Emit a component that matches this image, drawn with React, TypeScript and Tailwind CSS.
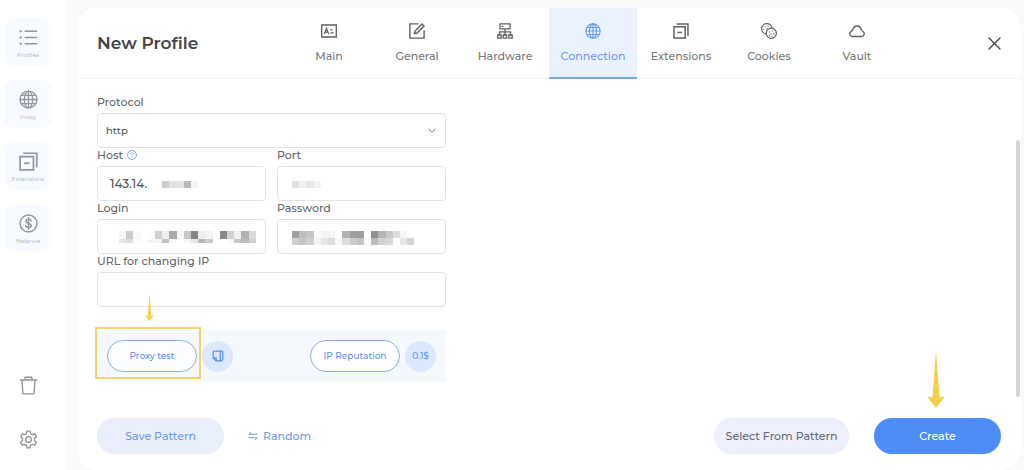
import React, { useId } from "react";

type IconProps = { className?: string };

const stroke = {
  fill: "none",
  stroke: "currentColor",
  strokeLinecap: "round" as const,
  strokeLinejoin: "round" as const,
};

function ListIcon({ className }: IconProps) {
  return (
    <svg viewBox="0 0 20 20" className={className} {...stroke} strokeWidth="1.6">
      <path d="M6.5 3.5h12M6.5 10h12M6.5 16.5h12" />
      <path d="M1.5 3.5h.6M1.5 10h.6M1.5 16.5h.6" strokeWidth="2.2" />
    </svg>
  );
}

function GlobeIcon({ className }: IconProps) {
  return (
    <svg viewBox="0 0 20 20" className={className} {...stroke} strokeWidth="1.4">
      <circle cx="10" cy="10" r="8.9" />
      <ellipse cx="10" cy="10" rx="4.4" ry="8.9" />
      <path d="M10 1.1v17.8M1.1 10h17.8M2.4 5.6h15.2M2.4 14.4h15.2" />
    </svg>
  );
}

function WindowsIcon({ className }: IconProps) {
  return (
    <svg viewBox="0 0 20 20" className={className} {...stroke} strokeLinecap="butt" strokeLinejoin="miter" strokeWidth="1.8">
      <path d="M1.2 4.8h14v14H1.2z" />
      <path d="M4.500 1.300h14.200v15" />
      <path d="M5.400 11.800h5.600" />
    </svg>
  );
}

function DollarIcon({ className }: IconProps) {
  return (
    <svg viewBox="0 0 20 20" className={className} {...stroke} strokeWidth="1.5">
      <circle cx="10" cy="10" r="8.9" />
      <path d="M12.8 7.4c-.3-1.2-1.4-1.8-2.8-1.8-1.6 0-2.8.8-2.8 2.1 0 3 5.8 1.4 5.8 4.5 0 1.3-1.2 2.2-3 2.2-1.6 0-2.8-.7-3.1-2M10 4v12" />
    </svg>
  );
}

function TrashIcon({ className }: IconProps) {
  return (
    <svg viewBox="0 0 20 20" className={className} {...stroke} strokeWidth="1.5">
      <path d="M1.5 4.3h17M6.5 4V1.4h7V4M3.2 4.5l.8 13c.1.8.5 1.3 1.3 1.3h9.4c.8 0 1.2-.5 1.3-1.3l.8-13" />
    </svg>
  );
}

function GearIcon({ className }: IconProps) {
  return (
    <svg viewBox="0 0 24 24" className={className} {...stroke} strokeWidth="1.7">
      <circle cx="12" cy="12" r="3.6" />
      <path d="M10 1.5h4l.7 3.1 2.2 1.3 3-1 2 3.5-2.3 2.1v3l2.3 2.1-2 3.5-3-1-2.2 1.3-.7 3.1h-4l-.7-3.1-2.2-1.3-3 1-2-3.5 2.3-2.1v-3L2.1 8.4l2-3.5 3 1 2.2-1.3z" />
    </svg>
  );
}

function CardIcon({ className }: IconProps) {
  return (
    <svg viewBox="0 0 16 16" className={className} {...stroke} strokeLinejoin="miter" strokeWidth="1.3">
      <path d="M.7 2h14.6v12H.7z" />
      <path d="M3.500 10.600l2-5 2 5M4.200 9.200h2.600M9.800 6.800h1.200M9.800 9.800h2.400" />
    </svg>
  );
}

function EditIcon({ className }: IconProps) {
  return (
    <svg viewBox="0 0 16 16" className={className} {...stroke} strokeLinejoin="miter" strokeWidth="1.4">
      <path d="M9 .9H.9v14.2h14.2V8" />
      <path d="M5.500 10.500l.5-2.500 7-7 2 2-7 7z" />
    </svg>
  );
}

function HardwareIcon({ className }: IconProps) {
  return (
    <svg viewBox="0 0 16 16" className={className} {...stroke} strokeLinejoin="miter" strokeWidth="1.3">
      <path d="M3 .8h10v5H3zM5 3.3h1M8 6v6M2.5 12V8.8h11V12" />
      <path d="M.8 12h3.4v3.2H.8zM6.3 12h3.4v3.2H6.3zM11.8 12h3.4v3.2h-3.4z" />
    </svg>
  );
}

function CookiesIcon({ className }: IconProps) {
  return (
    <svg viewBox="0 0 16 16" className={className} {...stroke} strokeWidth="1.2">
      <path d="M5.2 10.9A5.2 5.2 0 1 1 11 5.1" />
      <circle cx="10.3" cy="10.3" r="5.100" />
      <path
        d="M4 3.500h.1M7 3.200h.1M3 6.300h.1M6 5.600h.1M8.200 8.800h.1M11.300 8h.1M10 11h.1M12.800 10.800h.1M8.300 12.600h.1M11 13.300h.1"
        strokeWidth="1.2"
      />
    </svg>
  );
}

function CloudIcon({ className }: IconProps) {
  return (
    <svg viewBox="0 0 16 16" className={className} {...stroke} strokeWidth="1.3">
      <path d="M3.500 13.500h9a2.700 2.700 0 0 0 1.600-4.900c-.8-.6-1.300-.8-1.700-1.800C11.500 4.400 10 3 8 3S4.500 4.400 3.600 6.800c-.4 1-.9 1.200-1.700 1.800a2.700 2.700 0 0 0 1.600 4.900z" />
    </svg>
  );
}

function CopyIcon({ className }: IconProps) {
  return (
    <svg viewBox="0 0 12 12" className={className} {...stroke} strokeWidth="1.3">
      <path d="M1.200 2.200c0-.6.400-1 1-1h6.100v8.200c0 .9-.6 1.500-1.500 1.500H4.200l-3-2.800z" />
      <path d="M8.300 1.200h1.500c.6 0 1 .4 1 1v6.600c0 1.200-.8 2-2 2.100H6.500M1.400 8h2.800v2.700" />
    </svg>
  );
}

function SwapIcon({ className }: IconProps) {
  return (
    <svg viewBox="0 0 10 10" className={className} {...stroke} strokeWidth="1">
      <path d="M3 1L.8 3.3h8.400M7 9l2.200-2.300H.8" />
    </svg>
  );
}

function Arrow({ className }: IconProps) {
  return (
    <svg viewBox="0 0 18 60" className={className} preserveAspectRatio="none" fill="#f5d04c">
      <path d="M9 0L12.500 49 18 48 9 60 0 48l5.500 1z" />
    </svg>
  );
}

const CELL = 7.2;

function Mosaic({ rows, heights, className }: { rows: string[]; heights: number[]; className: string }) {
  const cells = rows.map((r) => r.split(" "));
  const width = cells[0].length * CELL;
  const height = heights.reduce((a, b) => a + b, 0);
  return (
    <svg
      viewBox={`0 0 ${width} ${height}`}
      width={width}
      height={height}
      shapeRendering="crispEdges"
      className={className}
      aria-hidden="true"
    >
      {cells.map((row, y) =>
        row.map((c, x) => (
          <rect
            key={`${x}-${y}`}
            x={x * CELL}
            y={y === 0 ? 0 : heights[0]}
            width={CELL}
            height={heights[y]}
            fill={`#${c}${c}${c}`}
          />
        )),
      )}
    </svg>
  );
}

const masks = {
  host: { rows: ["cc e0 e4 b8 f5"], heights: [7] },
  port: { rows: ["e2 f2 e8 f3"], heights: [7] },
  login: {
    rows: [
      "f7 cb f8 ff fb d0 ee aa f6 c8 86 ee f3 ff 86 d0 f0 b0 da",
      "e4 dd fb ff f3 f4 c2 f8 ff f8 e6 b6 cc ff ff f7 c6 bc d0",
    ],
    heights: [8, 4],
  },
  password: {
    rows: [
      "a0 be c6 f9 f5 f6 ff b2 9e 9e ff 90 b4 ca dc f6 ff",
      "d0 c4 ce f3 e6 dc f9 dd cc c4 f9 bc d4 d8 ff e6 d4",
    ],
    heights: [7, 7],
  },
};

const fieldBox =
  "block h-[35px] w-full rounded-[4px] border border-[#e2e2e2] bg-white text-[#555] outline-none focus:border-[#5c93ec]";

function Field({
  label,
  hint,
  value,
  type = "text",
  mask,
  maskClass = "",
}: {
  label: string;
  hint?: boolean;
  value?: string;
  type?: string;
  mask?: { rows: string[]; heights: number[] };
  maskClass?: string;
}) {
  const id = useId();
  return (
    <div>
      <div className="flex h-[18px] items-center gap-1 pb-1">
        <label htmlFor={id}>{label}</label>
        {hint && (
          <svg viewBox="0 0 10 10" className="size-[10px] text-[#5c93ec]" {...stroke} strokeWidth="0.8">
            <circle cx="5" cy="5" r="4.4" />
            <path d="M3.700 4c0-1.700 2.600-1.700 2.600 0 0 1-1.300 1-1.300 2M5 7.500h.01" />
          </svg>
        )}
      </div>
      <div className="relative">
        <input id={id} type={type} defaultValue={value} className={`${fieldBox} px-3 text-xs`} />
        {mask && <Mosaic {...mask} className={`pointer-events-none absolute ${maskClass}`} />}
      </div>
    </div>
  );
}

const sideItems = [
  { label: "Profiles", Icon: ListIcon },
  { label: "Proxy", Icon: GlobeIcon },
  { label: "Extensions", Icon: WindowsIcon },
  { label: "Balance", Icon: DollarIcon },
];

const tabs = [
  { label: "Main", Icon: CardIcon },
  { label: "General", Icon: EditIcon },
  { label: "Hardware", Icon: HardwareIcon },
  { label: "Connection", Icon: GlobeIcon, active: true },
  { label: "Extensions", Icon: WindowsIcon },
  { label: "Cookies", Icon: CookiesIcon },
  { label: "Vault", Icon: CloudIcon },
];

export default function App() {
  return (
    <div className="flex min-h-screen bg-[#fafafa] font-['Montserrat','Inter',sans-serif] text-[11px] font-medium text-[#666]">
      <aside className="flex w-[65px] shrink-0 flex-col justify-between bg-white pt-[18px] pb-[21px] pl-1">
        <nav className="flex flex-col gap-[14px]">
          {sideItems.map(({ label, Icon }) => (
            <button
              key={label}
              type="button"
              className="flex h-12 w-12 flex-col items-center justify-center gap-1 rounded-[10px] bg-[#f7faff] pt-[3px] text-[#9196a0]"
            >
              <Icon className="size-[19px]" />
              <span className="text-[6px] leading-[8px] font-normal text-[#aab0ba]">{label}</span>
            </button>
          ))}
        </nav>
        <div className="flex w-12 flex-col items-center gap-[35px] text-[#929292]">
          <button type="button" aria-label="Trash">
            <TrashIcon className="size-[19px]" />
          </button>
          <button type="button" aria-label="Settings">
            <GearIcon className="size-[19px]" />
          </button>
        </div>
      </aside>

      <main className="mt-2 mr-[3px] ml-3 flex min-w-0 flex-1 flex-col rounded-[18px] bg-white shadow-[0_0_2px_rgba(0,0,0,0.06)]">
        <header className="flex h-[71px] items-center border-b border-[#f4f5f6] px-5">
          <h1 className="w-[188px] shrink-0 pt-px text-[17px] font-semibold text-[#444]">New Profile</h1>
          <div className="flex h-[71px]" role="tablist">
            {tabs.map(({ label, Icon, active }) => (
              <button
                key={label}
                type="button"
                role="tab"
                aria-selected={!!active}
                className={`flex w-[88px] flex-col items-center gap-2 border-b-2 pt-[15px] leading-[18px] ${
                  active ? "border-[#7ba7dc] bg-[#eaf2fe] text-[#6a9cec]" : "border-transparent text-[#777]"
                }`}
              >
                <Icon className={active ? "size-4" : "size-4 text-[#5f5f5f]"} />
                {label}
              </button>
            ))}
          </div>
          <button type="button" aria-label="Close" className="ml-auto text-[#444]">
            <svg viewBox="0 0 13 13" className="size-[13px]" {...stroke} strokeWidth="1.4">
              <path d="M1 1l11 11M12 1L1 12" />
            </svg>
          </button>
        </header>

        <div className="flex flex-1 justify-between pr-px pl-5">
          <form className="w-[349px] pt-4 leading-[14px]">
            <div>
              <label htmlFor="protocol" className="block h-[18px]">
                Protocol
              </label>
              <div className="relative">
                <select id="protocol" className={`${fieldBox} appearance-none px-2 text-[10px]`} defaultValue="http">
                  <option value="http">http</option>
                  <option value="https">https</option>
                  <option value="socks5">socks5</option>
                </select>
                <svg
                  viewBox="0 0 8 6"
                  className="pointer-events-none absolute top-[15px] right-[10px] h-[6px] w-2 text-[#888]"
                  {...stroke}
                  strokeWidth="1"
                >
                  <path d="M1 1l3 3.500L7 1" />
                </svg>
              </div>
            </div>
            <div className="grid grid-cols-2 gap-x-[11px]">
              <Field label="Host" hint value="143.14." mask={masks.host} maskClass="top-[15px] left-[65px]" />
              <Field label="Port" mask={masks.port} maskClass="top-[15px] left-[15px]" />
              <Field label="Login" mask={masks.login} maskClass="top-3 left-[22px]" />
              <Field label="Password" type="password" mask={masks.password} maskClass="top-3 left-[15px]" />
            </div>
            <Field label="URL for changing IP" />

            <div className="relative mt-[23px] flex h-[52px] items-center justify-between rounded-[4px] bg-[#f5f9fe] px-[10px] text-[9px] text-[#5c93ec]">
              <div className="flex items-center gap-[5px]">
                <button type="button" className="h-8 w-[90px] rounded-full border border-[#85aff0] bg-white/60">
                  Proxy test
                </button>
                <button
                  type="button"
                  aria-label="Copy"
                  className="flex size-[31px] items-center justify-center rounded-full bg-[#dce8fd]"
                >
                  <CopyIcon className="size-3" />
                </button>
              </div>
              <div className="flex items-center gap-[5px]">
                <button type="button" className="h-8 w-[90px] rounded-full border border-[#85aff0] bg-white">
                  IP Reputation
                </button>
                <button type="button" className="size-[31px] rounded-full bg-[#dce8fd]">
                  0.1$
                </button>
              </div>
              <div className="pointer-events-none absolute -top-[3px] -left-[2px] h-[52px] w-[106px] border-2 border-[#f2d367]" />
              <Arrow className="pointer-events-none absolute -top-[37px] left-12 h-[28px] w-[9px]" />
            </div>
          </form>
          <div className="mt-[61px] h-[257px] w-1 rounded-full bg-[#d6d6d6]" />
        </div>

        <footer className="flex items-center justify-between px-5 pb-4">
          <div className="flex items-center gap-6">
            <button type="button" className="h-9 w-[127px] rounded-full bg-[#e9eefb] text-[#6a9cec]">
              Save Pattern
            </button>
            <button type="button" className="flex items-center gap-[5px] text-[#6a9cec]">
              <SwapIcon className="size-[10px]" />
              Random
            </button>
          </div>
          <div className="flex items-center gap-[25px]">
            <button type="button" className="h-9 w-[135px] rounded-full bg-[#edf0fb] text-[#626879]">
              Select From Pattern
            </button>
            <div className="relative">
              <button type="button" className="h-9 w-[127px] rounded-full bg-[#4f8df6] text-white">
                Create
              </button>
              <Arrow className="pointer-events-none absolute -top-[68px] left-[53px] h-[58px] w-[18px]" />
            </div>
          </div>
        </footer>
      </main>
    </div>
  );
}
